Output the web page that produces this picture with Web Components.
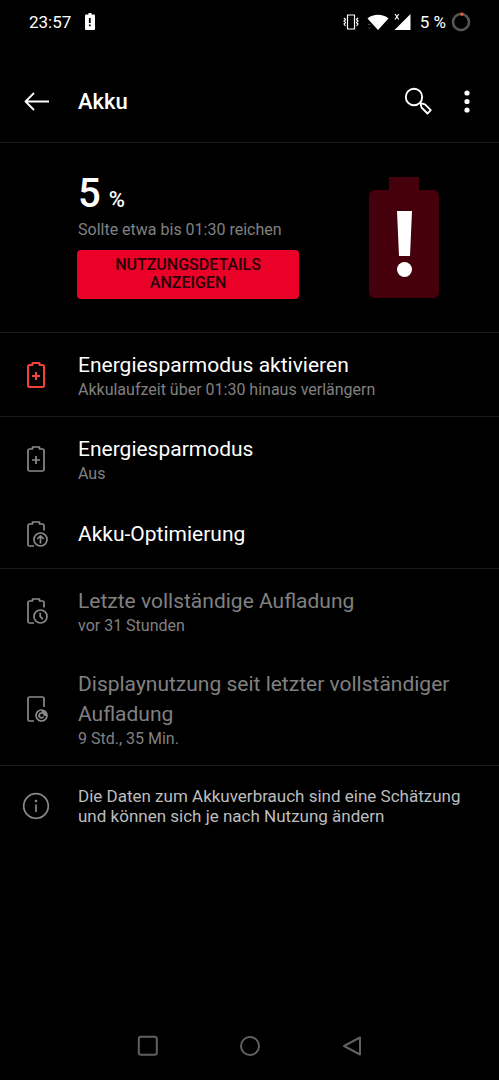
<!DOCTYPE html>
<html lang="de">
<head>
<meta charset="utf-8">
<meta name="viewport" content="width=device-width, initial-scale=1">
<title>Akku</title>
<style>
  html { background: #000; }
  body { margin: 0; background: #000; color: #fff; font-family: Roboto, "Noto Sans", sans-serif; }
</style>
</head>
<body>
<battery-screen></battery-screen>

<script>
const define = (name, html, setup) => {
  const template = document.createElement('template');
  template.innerHTML = html;
  customElements.define(name, class extends HTMLElement {
    constructor() {
      super();
      this.attachShadow({ mode: 'open' }).append(template.content.cloneNode(true));
    }
    connectedCallback() { if (setup) setup(this, this.shadowRoot); }
  });
};

const openBattery = '<path d="M10 26H5.500Q4 26 4 24.500V5.500Q4 4 5.500 4H8.500V2H15.500V4H18.500Q20 4 20 5.500V10.500"/><circle cx="16.500" cy="19.500" r="6.500"/>';
const icons = {
  plus: ['0 0 24 28', '<path d="M5.500 4H8.500V2H15.500V4H18.500Q20 4 20 5.500V24.500Q20 26 18.500 26H5.500Q4 26 4 24.500V5.500Q4 4 5.500 4ZM12 11V19M8 15H16"/>'],
  optimize: ['0 0 24 28', openBattery + '<path d="M16.500 23.500V16M13.200 19L16.500 15.800L19.800 19"/>'],
  clock: ['0 0 24 28', openBattery + '<path d="M16.200 15.800V19.700L18.800 22"/>'],
  display: ['0 0 24 28', '<path d="M10 26H5.500Q4 26 4 24.500V3.500Q4 2 5.500 2H18.500Q20 2 20 3.500V12"/><circle cx="17.500" cy="20.500" r="5.500"/><path d="M17.500 15V18.500A2.300 2.300 0 0 1 19.700 21H23A5.500 5.500 0 0 0 17.500 15Z" fill="currentColor" stroke="none"/><path d="M18 18.300A2.300 2.300 0 1 0 19.500 21.500"/>'],
  info: ['0 0 28 28', '<circle cx="14" cy="14" r="12.300"/><path d="M14 12.500V20"/><circle cx="14" cy="9" r="1.300" fill="currentColor" stroke="none"/>'],
  back: ['0 0 28 28', '<path stroke-width="1.800" d="M27 13.500H4M12 5L3.500 13.500L12 22"/>'],
  search: ['0 0 32 32', '<circle cx="12" cy="11" r="8.200" stroke-width="1.900"/><path stroke-width="1.800" d="M18.500 17.500L19.500 21.500L25.500 27.500L28.800 24.200L23 18.300L18.500 17.200Z"/>'],
  more: ['0 0 28 28', '<g fill="currentColor" stroke="none"><circle cx="14" cy="5" r="2.600"/><circle cx="14" cy="13.500" r="2.600"/><circle cx="14" cy="22" r="2.600"/></g>'],
  low: ['0 0 10 18', '<path d="M3.500 0H6.500V1.500H9Q10 1.500 10 2.500V16Q10 17 9 17H1Q0 17 0 16V2.500Q0 1.500 1 1.500H3.500Z" fill="currentColor" stroke="none"/><path d="M4.800 5V10M4.800 11.500V13.300" stroke="#000" stroke-width="1.800"/>'],
  vibrate: ['0 0 20 18', '<path stroke-width="1.200" d="M5.500 2H12.500V16H5.500ZM2 5L3.500 6.500L2 8L3.500 9.500L2 11L3.500 13M16 5L14.500 6.500L16 8L14.500 9.500L16 11L14.500 13"/>'],
  wifi: ['0 0 22 18', '<path d="M0.500 5.500C6 0.500 16 0.500 21.500 5.500L11 17Z" fill="currentColor" stroke="none"/><path d="M1 12L2.200 10.800L3.400 12M1 14.500L2.200 15.700L3.400 14.500" stroke="#555" stroke-width="1"/>'],
  signal: ['0 0 17 18', '<path d="M16.500 1V17H0.500Z" fill="currentColor" stroke="none"/><path d="M1 1L4.800 6.500M4.800 1L1 6.500" stroke-width="1.200"/>'],
  ring: ['0 0 20 20', '<circle cx="10" cy="10" r="8" stroke="#555" stroke-width="2.600"/><path d="M9.500 2A8 8 0 0 1 12.300 2.400" stroke="#e8603c" stroke-width="2.800"/>'],
  alert: ['0 0 72 124', '<path d="M21 1H51V14H65Q71 14 71 20V116Q71 122 65 122H7Q1 122 1 116V20Q1 14 7 14H21Z" fill="#46000c" stroke="none"/><path d="M29 35H44L42 80H31Z" fill="#fff" stroke="none"/><circle cx="36.500" cy="93.500" r="7.500" fill="#fff" stroke="none"/>'],
  recent: ['0 0 24 24', '<rect x="2.800" y="2.800" width="18" height="18" rx="2.200" stroke-width="2"/>'],
  home: ['0 0 24 24', '<circle cx="12" cy="12" r="9" stroke-width="2"/>'],
  previous: ['0 0 24 24', '<path stroke-width="2" d="M20 3.500V20.500L4 12Z"/>']
};

define('line-icon', `
  <style>
    :host { display: block; flex: none; }
    svg { display: block; fill: none; stroke: currentColor; stroke-width: var(--stroke, 1.700); stroke-linejoin: round; }
  </style><svg aria-hidden="true"></svg>`,
  (host, root) => {
    const [box, body] = icons[host.getAttribute('name')];
    const svg = root.querySelector('svg');
    const [, , w, h] = box.split(' ');
    svg.setAttribute('viewBox', box);
    svg.setAttribute('width', w);
    svg.setAttribute('height', h);
    svg.innerHTML = body;
  });

define('icon-button', `
  <style>
    :host { display: block; flex: none; }
    button { display: grid; place-items: center; width: 44px; height: 44px; padding: 0; border: 0; background: none; color: inherit; }
  </style><button type="button"><slot></slot></button>`,
  (host, root) => root.querySelector('button').setAttribute('aria-label', host.getAttribute('label')));

define('status-bar', `
  <style>
    :host { display: flex; align-items: center; justify-content: space-between; height: 44px; padding: 0 28px 0 29px; font-size: 17px; line-height: 20px; }
    div { display: flex; align-items: center; }
    .left { gap: 14px; }
    .right { gap: 5px; }
    .right span { padding-left: 4px; }
  </style>
  <div class="left"><span>23:57</span><line-icon name="low"></line-icon></div>
  <div class="right"><line-icon name="vibrate"></line-icon><line-icon name="wifi"></line-icon><line-icon name="signal"></line-icon><span>5 %</span><line-icon name="ring"></line-icon></div>`);

define('title-bar', `
  <style>
    :host { display: flex; align-items: center; padding: 36px 10px 18px 14px; border-bottom: 1px solid #1c1c1c; }
    h1 { flex: 1; margin: 0; padding-left: 20px; font-size: 22px; line-height: 28px; font-weight: 500; }
    .actions { display: flex; gap: 5px; }
  </style>
  <icon-button label="Zurück"><line-icon name="back"></line-icon></icon-button>
  <h1><slot></slot></h1>
  <div class="actions">
    <icon-button label="Suchen"><line-icon name="search"></line-icon></icon-button>
    <icon-button label="Weitere Optionen"><line-icon name="more"></line-icon></icon-button>
  </div>`);

define('battery-summary', `
  <style>
    :host { display: flex; align-items: flex-start; justify-content: space-between; gap: 24px; padding: 33px 59px 32px 77px; border-bottom: 1px solid #1c1c1c; }
    .info { flex: 0 1 222px; }
    .level { display: flex; align-items: baseline; gap: 8px; margin: 0; padding-left: 1px; font-size: 40px; line-height: 36px; font-weight: 500; }
    small { font-size: 22px; line-height: 24px; }
    .estimate { margin: 8px 0 10px; padding-left: 1px; font-size: 16px; line-height: 20px; color: #808080; white-space: nowrap; }
    button { display: block; width: 100%; padding: 6px 32px 7px; border: 0; border-radius: 4px; background: #eb0028; color: #280008; font: 500 16px/18px Roboto, sans-serif; text-transform: uppercase; }
  </style>
  <div class="info">
    <p class="level">5 <small>%</small></p>
    <p class="estimate">Sollte etwa bis 01:30 reichen</p>
    <button type="button">Nutzungsdetails anzeigen</button>
  </div>
  <line-icon name="alert"></line-icon>`);

define('setting-row', `
  <style>
    :host { display: flex; align-items: center; padding: 17px 24px 16px; --title: #fff; --icon: #8a8a8a; }
    :host([single]) { padding: 19px 24px; }
    :host([divided]) { border-bottom: 1px solid #1c1c1c; }
    :host([muted]) { --title: #808080; }
    :host([urgent]) { --icon: #f04438; --stroke: 2; }
    .icon { flex: none; width: 24px; margin-right: 30px; color: var(--icon); }
    h2 { margin: 0; font-size: 21px; line-height: 30px; font-weight: 400; color: var(--title); }
    .sub { display: block; font-size: 16px; line-height: 20px; color: #808080; }
    :host([single]) .sub { display: none; }
  </style>
  <div class="icon"></div>
  <div><h2><slot></slot></h2><span class="sub"><slot name="sub"></slot></span></div>`,
  (host, root) => {
    const icon = document.createElement('line-icon');
    icon.setAttribute('name', host.getAttribute('icon'));
    root.querySelector('.icon').replaceChildren(icon);
  });

define('info-note', `
  <style>
    :host { display: flex; align-items: center; gap: 28px; padding: 20px 22px; }
    line-icon { color: #8a8a8a; }
    p { margin: 0; font-size: 17px; line-height: 20px; color: #bdbdbd; }
  </style>
  <line-icon name="info"></line-icon><p><slot></slot></p>`);

define('navigation-bar', `
  <style>
    :host { display: flex; justify-content: center; gap: 58px; padding: 12px 0; color: #606060; }
  </style>
  <icon-button label="Letzte Apps"><line-icon name="recent"></line-icon></icon-button>
  <icon-button label="Startseite"><line-icon name="home"></line-icon></icon-button>
  <icon-button label="Zurück"><line-icon name="previous"></line-icon></icon-button>`);

define('battery-screen', `
  <style>
    :host { display: flex; flex-direction: column; min-height: 100vh; }
    main { flex: 1; }
  </style>
  <status-bar></status-bar>
  <title-bar>Akku</title-bar>
  <main>
    <battery-summary></battery-summary>
    <setting-row icon="plus" urgent divided>Energiesparmodus aktivieren<span slot="sub">Akkulaufzeit über 01:30 hinaus verlängern</span></setting-row>
    <setting-row icon="plus">Energiesparmodus<span slot="sub">Aus</span></setting-row>
    <setting-row icon="optimize" single divided>Akku-Optimierung</setting-row>
    <setting-row icon="clock" muted>Letzte vollständige Aufladung<span slot="sub">vor 31 Stunden</span></setting-row>
    <setting-row icon="display" muted divided>Displaynutzung seit letzter vollständiger Aufladung<span slot="sub">9 Std., 35 Min.</span></setting-row>
    <info-note>Die Daten zum Akkuverbrauch sind eine Schätzung und können sich je nach Nutzung ändern</info-note>
  </main>
  <navigation-bar></navigation-bar>`);
</script>
</body>
</html>
